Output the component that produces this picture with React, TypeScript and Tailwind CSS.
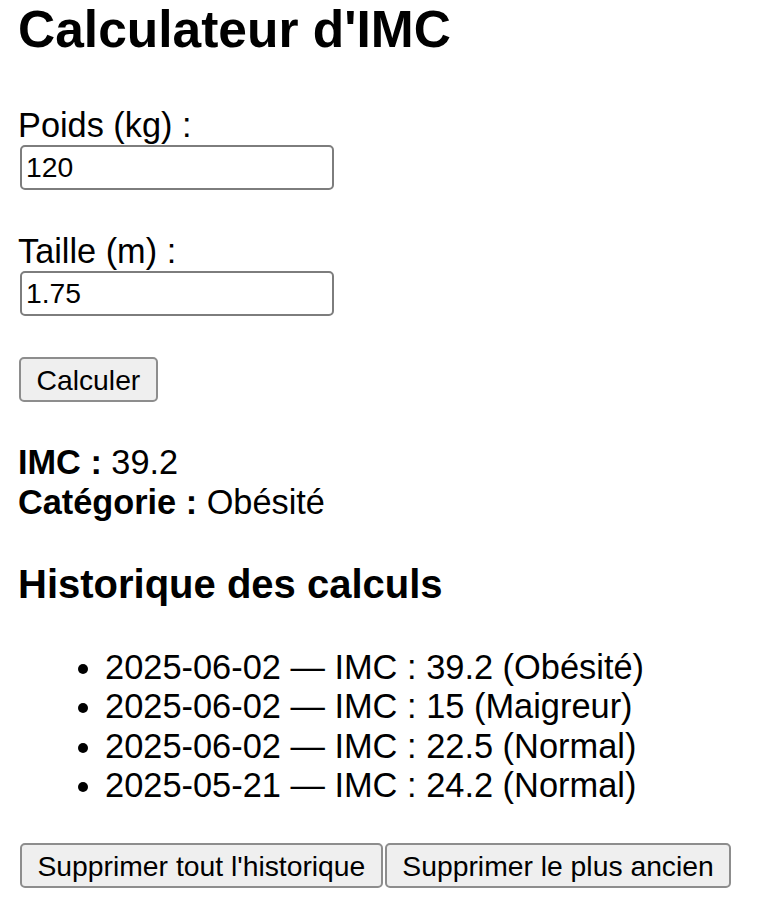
import { useState } from 'react';

type Entry = { date: string; imc: number; categorie: string };

const initialHistory: Entry[] = [
  { date: '2025-06-02', imc: 39.2, categorie: 'Obésité' },
  { date: '2025-06-02', imc: 15, categorie: 'Maigreur' },
  { date: '2025-06-02', imc: 22.5, categorie: 'Normal' },
  { date: '2025-05-21', imc: 24.2, categorie: 'Normal' },
];

const getCategorie = (imc: number) => {
  if (imc < 18.5) return 'Maigreur';
  if (imc < 25) return 'Normal';
  if (imc < 30) return 'Surpoids';
  return 'Obésité';
};

const inputClass =
  'block ml-[2px] w-[314px] h-[45px] rounded-[5px] border-2 border-[#7d7d7d] bg-white px-[4px] text-[28.3px] leading-[32px] text-black outline-none';

const buttonClass =
  'h-[45px] rounded-[5px] border-2 border-[#8d8d8d] bg-[#efefef] px-[15.5px] text-[28.3px] leading-[32px] text-black';

export default function App() {
  const [poids, setPoids] = useState('120');
  const [taille, setTaille] = useState('1.75');
  const [result, setResult] = useState<Entry | null>(initialHistory[0]);
  const [history, setHistory] = useState<Entry[]>(initialHistory);

  const calculer = () => {
    const p = parseFloat(poids);
    const t = parseFloat(taille);
    if (!p || !t) return;
    const imc = Math.round((p / (t * t)) * 10) / 10;
    const entry = {
      date: new Date().toISOString().slice(0, 10),
      imc,
      categorie: getCategorie(imc),
    };
    setResult(entry);
    setHistory([entry, ...history]);
  };

  return (
    <div
      className="min-h-[904px] bg-white px-[18px] text-black"
      style={{ fontFamily: '"Liberation Sans", Arial, sans-serif' }}
    >
      <h1 className="text-[51.5px] font-bold leading-[58px]">Calculateur d'IMC</h1>

      <div className="mt-[48px]">
        <label htmlFor="poids" className="block text-[34.3px] leading-[39px]">
          Poids (kg) :
        </label>
        <input
          id="poids"
          type="text"
          value={poids}
          onChange={(e) => setPoids(e.target.value)}
          className={inputClass}
        />
      </div>

      <div className="mt-[42px]">
        <label htmlFor="taille" className="block text-[34.3px] leading-[39px]">
          Taille (m) :
        </label>
        <input
          id="taille"
          type="text"
          value={taille}
          onChange={(e) => setTaille(e.target.value)}
          className={inputClass}
        />
      </div>

      <div className="mt-[41px] ml-[1px]">
        <button onClick={calculer} className={buttonClass}>
          Calculer
        </button>
      </div>

      {result && (
        <div className="mt-[40px] text-[34.3px] leading-[40px]">
          <div>
            <strong className="font-bold">IMC :</strong> {result.imc}
          </div>
          <div>
            <strong className="font-bold">Catégorie :</strong> {result.categorie}
          </div>
        </div>
      )}

      <h3 className="mt-[39px] text-[40px] font-bold leading-[46px]">Historique des calculs</h3>

      <ul className="mt-[41px] list-disc pl-[87px] text-[34.4px] leading-[39.33px]">
        {history.map((h, i) => (
          <li key={i}>
            {h.date} — IMC : {h.imc} ({h.categorie})
          </li>
        ))}
      </ul>

      <div className="mt-[38px] ml-[2px] flex gap-[2px]">
        <button onClick={() => setHistory([])} className={buttonClass}>
          Supprimer tout l'historique
        </button>
        <button onClick={() => setHistory(history.slice(0, -1))} className={buttonClass}>
          Supprimer le plus ancien
        </button>
      </div>
    </div>
  );
}
